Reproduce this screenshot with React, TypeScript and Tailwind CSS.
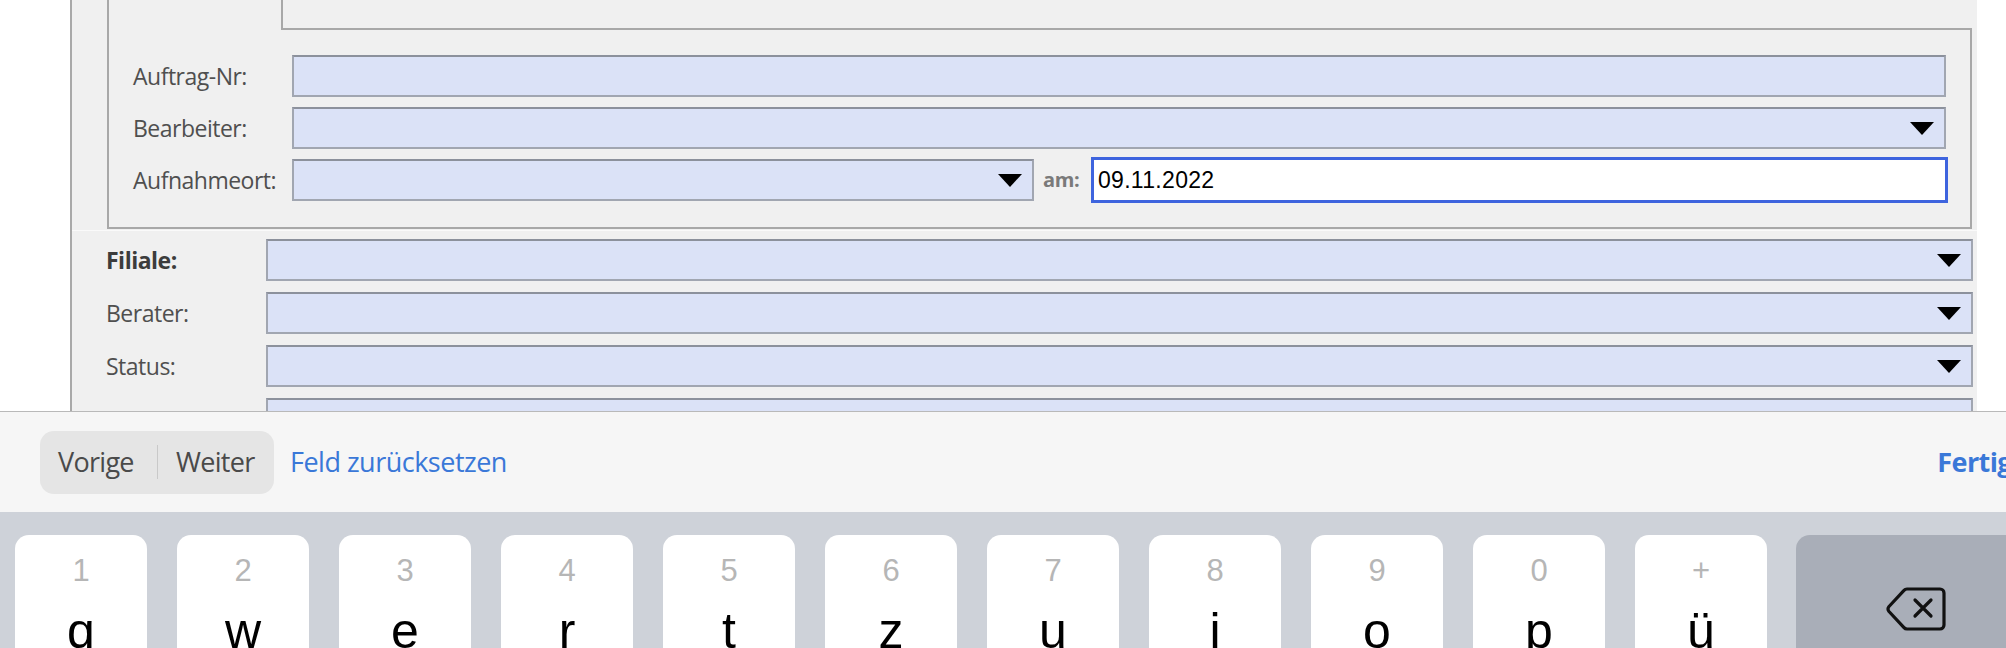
import React from 'react';

const Arrow = () => (
  <svg width="24" height="13" viewBox="0 0 24 13" className="shrink-0">
    <path d="M0 0h24L12 13z" fill="#000" />
  </svg>
);

const Field = ({ arrow, className = '' }: { arrow?: boolean; className?: string }) => (
  <div
    className={`h-[42px] bg-[#dbe2f7] border-2 border-[#a1a6b1] border-t-[#8c919c] flex items-center justify-end pr-[10px] ${className}`}
  >
    {arrow && <Arrow />}
  </div>
);

const Label = ({ children, bold }: { children: React.ReactNode; bold?: boolean }) => (
  <span
    className={`font-['Open_Sans',sans-serif] text-[23px] tracking-[-0.5px] ${bold ? 'font-bold text-[#3c3c3c]' : 'text-[#4f4f4f]'}`}
  >
    {children}
  </span>
);

const BackspaceIcon = () => (
  <svg width="62" height="46" viewBox="0 0 62 46" fill="none">
    <path
      d="M22 3h33a4 4 0 0 1 4 4v32a4 4 0 0 1-4 4H22a4 4 0 0 1-3-1.4L4 25.5a4 4 0 0 1 0-5L19 4.4A4 4 0 0 1 22 3z"
      stroke="#111"
      strokeWidth="3.2"
      strokeLinejoin="round"
    />
    <path d="M30 14l16 16M46 14L30 30" stroke="#111" strokeWidth="3.2" strokeLinecap="round" />
  </svg>
);

const keys = [
  ['1', 'q'],
  ['2', 'w'],
  ['3', 'e'],
  ['4', 'r'],
  ['5', 't'],
  ['6', 'z'],
  ['7', 'u'],
  ['8', 'i'],
  ['9', 'o'],
  ['0', 'p'],
  ['+', 'ü'],
];

export default function App() {
  return (
    <div className="w-[2006px] h-[648px] overflow-hidden bg-white flex flex-col">
      {/* form area */}
      <div className="h-[411px] overflow-hidden flex shrink-0">
        <div className="w-[70px] shrink-0 bg-white" />
        <div className="w-[1907px] shrink-0 bg-[#f0f0f0] border-l-2 border-[#a9a9a9]">
          {/* group box with tab */}
          <div className="ml-[35px] w-[1865px]">
            <div className="flex h-[30px]">
              <div className="w-[176px] border-l-2 border-r-2 border-[#a8a8a8]" />
              <div className="flex-1 border-b-2 border-[#a8a8a8]" />
            </div>
            <div className="border-l-2 border-r-2 border-b-2 border-[#a8a8a8] pt-[25px] pb-[26px] pl-[24px] pr-[24px] flex flex-col gap-[10px]">
              <div className="flex items-center h-[42px]">
                <div className="w-[159px] shrink-0">
                  <Label>Auftrag-Nr:</Label>
                </div>
                <Field className="flex-1" />
              </div>
              <div className="flex items-center h-[42px]">
                <div className="w-[159px] shrink-0">
                  <Label>Bearbeiter:</Label>
                </div>
                <Field className="flex-1" arrow />
              </div>
              <div className="flex items-center h-[42px]">
                <div className="w-[159px] shrink-0">
                  <Label>Aufnahmeort:</Label>
                </div>
                <Field className="w-[742px] shrink-0" arrow />
                <div className="w-[57px] shrink-0 pl-[9px]">
                  <span className="font-['Open_Sans',sans-serif] text-[20px] font-bold text-[#7a7a7a] tracking-[-0.4px]">
                    am:
                  </span>
                </div>
                <div className="flex-1 h-[46px] -mr-[2px] bg-white border-[3px] border-[#3e64de] flex items-center pl-[4px]">
                  <span className="font-['Liberation_Sans',sans-serif] text-[23px] tracking-[0.3px] text-black">
                    09.11.2022
                  </span>
                </div>
              </div>
            </div>
          </div>
          {/* lower rows */}
          <div className="mt-[1px] border-t border-[#fafafa] pt-[8px] pl-[34px] pr-[4px] flex flex-col gap-[11px]">
            {[
              { l: 'Filiale:', b: true },
              { l: 'Berater:' },
              { l: 'Status:' },
              { l: 'Name:' },
            ].map((r) => (
              <div key={r.l} className="flex items-center h-[42px]">
                <div className="w-[160px] shrink-0">
                  <Label bold={r.b}>{r.l}</Label>
                </div>
                <Field className="flex-1" arrow={r.l !== 'Name:'} />
              </div>
            ))}
          </div>
        </div>
        <div className="flex-1 bg-white" />
      </div>

      {/* keyboard accessory bar */}
      <div className="h-[101px] shrink-0 bg-[#f6f6f6] border-t border-[#b9b9b9] flex items-center pl-[40px] pr-0">
        <div className="h-[63px] w-[234px] shrink-0 rounded-[14px] bg-[#e5e5e5] flex items-center font-['Open_Sans',sans-serif] text-[27px] text-[#4a4a4a] tracking-[-0.7px]">
          <span className="pl-[18px] w-[117px]">Vorige</span>
          <span className="w-px h-[34px] bg-[#c9c9c9]" />
          <span className="pl-[18px]">Weiter</span>
        </div>
        <span className="ml-[16px] font-['Open_Sans',sans-serif] text-[27px] text-[#3a78d8] tracking-[-0.5px]">
          Feld zurücksetzen
        </span>
        <span className="ml-auto shrink-0 -mr-[6px] font-['Open_Sans',sans-serif] text-[27px] font-bold text-[#3a78d8] tracking-[-0.6px]">
          Fertig
        </span>
      </div>

      {/* keyboard */}
      <div className="flex-1 bg-[#ced2d9] pt-[23px] pl-[15px] flex gap-[30px] overflow-hidden">
        {keys.map(([n, l]) => (
          <div
            key={l}
            className="w-[132px] h-[140px] shrink-0 rounded-[14px] bg-white flex flex-col items-center font-['Liberation_Sans',sans-serif]"
          >
            <span className="mt-[18px] text-[31px] leading-[36px] text-[#b6b6b6] font-light">{n}</span>
            <span className="mt-[17px] text-[50px] leading-[50px] text-black">{l}</span>
          </div>
        ))}
        <div className="w-[240px] h-[140px] shrink-0 -ml-[1px] rounded-[14px] bg-[#a9aeb8] flex justify-start pl-[89px] pt-[51px]">
          <BackspaceIcon />
        </div>
      </div>
    </div>
  );
}
